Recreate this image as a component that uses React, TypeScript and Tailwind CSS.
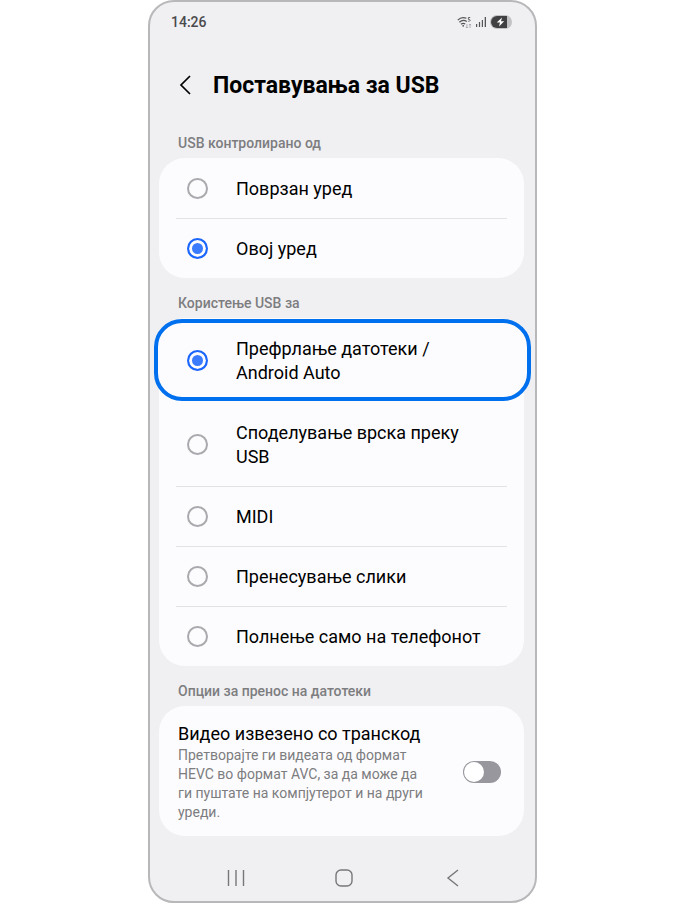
import { useState } from "react"

type Option = { value: string; label: string; highlighted?: boolean }

const controlOptions: Option[] = [
  { value: "connected", label: "Поврзан уред" },
  { value: "this", label: "Овој уред" },
]

const usageOptions: Option[] = [
  { value: "files", label: "Префрлање датотеки / Android Auto", highlighted: true },
  { value: "tethering", label: "Споделување врска преку USB" },
  { value: "midi", label: "MIDI" },
  { value: "images", label: "Пренесување слики" },
  { value: "charge", label: "Полнење само на телефонот" },
]

function StatusBar() {
  return (
    <div className="flex h-10 items-center justify-between pl-[21px] pr-[23px] text-sm font-medium text-[#4a4a4c]">
      <span>14:26</span>
      <div className="flex items-center gap-1">
        <svg width="15" height="13" viewBox="0 0 15 13" fill="none" stroke="#555557" aria-hidden="true">
          <path d="M0.8 4.2C3.2 1.5 6.4 1 9.4 2.3" strokeWidth="1.2" />
          <path d="M2.4 6.3C4.6 4.2 7.4 4 9.8 5.6" strokeWidth="1.2" />
          <path d="M4 8.3C5.3 7.2 6.9 7.1 8.2 8" strokeWidth="1.2" />
          <circle cx="6.2" cy="9.8" r="0.9" fill="#555557" stroke="none" />
          <path d="M13.2 1.5H11.4V3.4C13.8 3 13.8 5.6 11.2 5.2" strokeWidth="0.9" />
          <path d="M9.9 8V12M8.8 10.9L9.9 12L11 10.9M13 12V8M11.9 9.1L13 8L14.1 9.1" stroke="#a0a0a3" strokeWidth="0.8" />
        </svg>
        <svg width="10" height="12" viewBox="0 0 10 12" fill="#555557" aria-hidden="true">
          <rect x="0" y="8" width="1.2" height="3" />
          <rect x="2.9" y="6" width="1.2" height="5" />
          <rect x="5.8" y="4" width="1.2" height="7" />
          <rect x="8.7" y="1" width="1.3" height="10" />
        </svg>
        <svg width="22" height="14" viewBox="0 0 22 14" aria-hidden="true">
          <rect width="22" height="14" rx="7" fill="#c2c2c4" />
          <path d="M7 1H17V13H7A6 6 0 0 1 7 1Z" fill="#404042" />
          <path d="M12 2.4L6.8 7.6H10L9 11.6L14.2 6.3H11Z" fill="#fff" />
        </svg>
      </div>
    </div>
  )
}

function SectionTitle({ id, children }: { id: string; children: string }) {
  return (
    <h2 id={id} className="flex h-[30px] items-center px-7 text-sm font-medium text-[#7d7d80]">
      {children}
    </h2>
  )
}

function RadioList({ name, labelledBy, options, initial }: { name: string; labelledBy: string; options: Option[]; initial: string }) {
  const [selected, setSelected] = useState(initial)

  return (
    <div role="radiogroup" aria-labelledby={labelledBy} className="ml-[9px] mr-[11px] rounded-[26px] bg-[#fcfcfe]">
      {options.map((option, i) => (
        <div key={option.value} className="relative px-[17px]">
          {option.highlighted && (
            <div className="absolute -left-[5px] -right-[7px] inset-y-px rounded-[28px] border-4 border-[#0070ee] bg-[#fcfcfe]" />
          )}
          <label
            className={
              i > 0 && !options[i - 1].highlighted
                ? "relative flex cursor-pointer items-center border-t border-[#e3e3e6] pb-[17px] pt-[17px] pl-[11px] pr-5"
                : "relative flex cursor-pointer items-center pb-[17px] pt-[18px] pl-[11px] pr-5"
            }
          >
            <input
              type="radio"
              name={name}
              value={option.value}
              checked={selected === option.value}
              onChange={() => setSelected(option.value)}
              className="size-[21px] shrink-0 appearance-none rounded-full border-2 border-[#a9a9ae] checked:border-[#1a66ff] checked:bg-[#3b7bff] checked:shadow-[inset_0_0_0_3px_#fcfcfe]"
            />
            <span className="ml-7 pt-px text-lg leading-6">{option.label}</span>
          </label>
        </div>
      ))}
    </div>
  )
}

function TranscodeSetting() {
  const [enabled, setEnabled] = useState(false)

  return (
    <label className="ml-[9px] mr-[11px] flex cursor-pointer items-center justify-between rounded-[26px] bg-[#fcfcfe] pb-3.5 pt-4 pl-[19px] pr-[23px]">
      <span className="w-[256px]">
        <span className="block text-lg leading-6">Видео извезено со транскод</span>
        <span className="block text-sm leading-[19px] text-[#7d7d80]">
          Претворајте ги видеата од формат HEVC во формат AVC, за да може да ги пуштате на компјутерот и на други уреди.
        </span>
      </span>
      <input
        type="checkbox"
        role="switch"
        checked={enabled}
        onChange={() => setEnabled(!enabled)}
        className="h-[22px] w-[38px] shrink-0 appearance-none rounded-full bg-[#98979d] p-px before:block before:size-5 before:rounded-full before:bg-white checked:bg-[#1a66ff] checked:before:ml-4"
      />
    </label>
  )
}

function NavigationBar() {
  return (
    <nav className="mt-[19px] flex h-[46px] items-center justify-around pl-8 pr-7">
      <button type="button" aria-label="Recents">
        <svg width="18" height="18" viewBox="0 0 18 18" stroke="#77777a" strokeWidth="1.4" aria-hidden="true">
          <path d="M1.5 1V17M9 1V17M16.5 1V17" />
        </svg>
      </button>
      <button type="button" aria-label="Home">
        <svg width="18" height="18" viewBox="0 0 18 18" fill="none" stroke="#77777a" strokeWidth="1.4" aria-hidden="true">
          <rect x="1" y="1" width="16" height="16" rx="5" />
        </svg>
      </button>
      <button type="button" aria-label="Back">
        <svg width="18" height="18" viewBox="0 0 18 18" fill="none" stroke="#77777a" strokeWidth="1.4" aria-hidden="true">
          <path d="M14 1L4 9L14 17" />
        </svg>
      </button>
    </nav>
  )
}

export default function App() {
  return (
    <div className="min-h-screen bg-white pl-px font-['Roboto','Noto_Sans',sans-serif] text-black">
      <main className="mx-auto w-full max-w-[389px] rounded-[26px] border-2 border-[#b8b8ba] bg-[#f0f0f3]">
        <StatusBar />
        <header className="flex h-[86px] items-center pl-7">
          <button type="button" aria-label="Back">
            <svg width="16" height="20" viewBox="0 0 16 20" fill="none" stroke="#000" strokeWidth="1.7" aria-hidden="true">
              <path d="M12 1L3 10L12 19" />
            </svg>
          </button>
          <h1 className="ml-[19px] pt-0.5 text-[23px] font-bold">Поставувања за USB</h1>
        </header>

        <SectionTitle id="controlled-by">USB контролирано од</SectionTitle>
        <RadioList name="control" labelledBy="controlled-by" options={controlOptions} initial="this" />

        <div className="mt-[10px]">
          <SectionTitle id="use-for">Користење USB за</SectionTitle>
          <RadioList name="usage" labelledBy="use-for" options={usageOptions} initial="files" />
        </div>

        <div className="mt-[10px]">
          <SectionTitle id="transfer-options">Опции за пренос на датотеки</SectionTitle>
          <TranscodeSetting />
        </div>

        <NavigationBar />
      </main>
    </div>
  )
}
